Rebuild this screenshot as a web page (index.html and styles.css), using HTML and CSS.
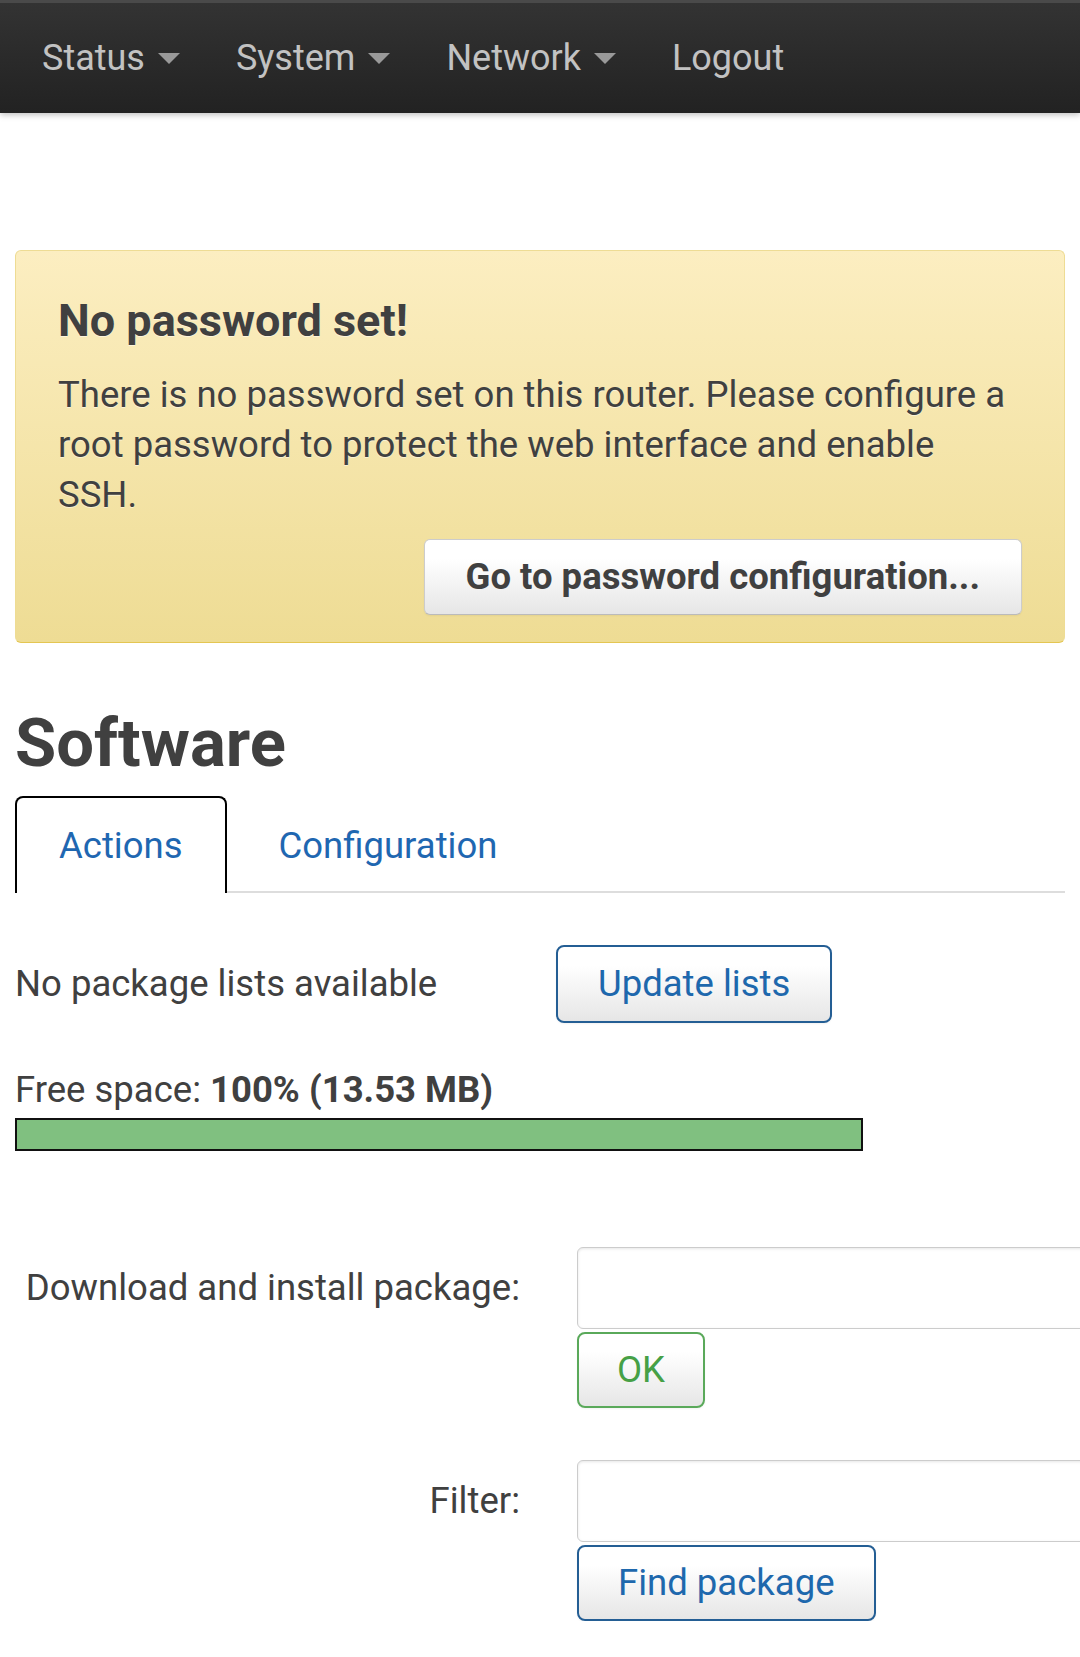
FILE: index.html
```html
<!DOCTYPE html>
<html lang="en">
<head>
    <meta charset="UTF-8">
    <meta name="viewport" content="width=device-width, initial-scale=1.0">
    <title>Software - LuCI</title>
    <link rel="stylesheet" href="styles.css">
</head>
<body>
    <header class="navbar">
        <ul class="nav">
            <li><a href="#" class="dropdown">Status</a></li>
            <li><a href="#" class="dropdown">System</a></li>
            <li><a href="#" class="dropdown">Network</a></li>
            <li><a href="#">Logout</a></li>
        </ul>
    </header>

    <main class="container">
        <div class="alert">
            <h4>No password set!</h4>
            <p>There is no password set on this router. Please configure a root password to protect the web interface and enable SSH.</p>
            <div class="alert-actions">
                <button class="btn">Go to password configuration...</button>
            </div>
        </div>

        <h2>Software</h2>
        <ul class="tabs">
            <li class="active"><a href="#">Actions</a></li>
            <li><a href="#">Configuration</a></li>
        </ul>

        <div class="lists-row">
            <span>No package lists available</span>
            <div><button class="btn btn-blue">Update lists</button></div>
        </div>

        <div class="free-space">
            Free space: <strong>100% (13.53 MB)</strong>
            <div class="progress"><div class="progress-bar" style="width: 100%"></div></div>
        </div>

        <div class="form-row">
            <label for="pkgUrl">Download and install package:</label>
            <div class="controls">
                <input type="text" id="pkgUrl">
                <button class="btn btn-green">OK</button>
            </div>
        </div>

        <div class="form-row filter-row">
            <label for="filter">Filter:</label>
            <div class="controls">
                <input type="text" id="filter">
                <button class="btn btn-blue btn-find">Find package</button>
            </div>
        </div>
    </main>
</body>
</html>
```

FILE: styles.css
```css
html, body {
    margin: 0;
    padding: 0;
}
body {
    font-family: Roboto, "Liberation Sans", sans-serif;
    font-size: 36.5px;
    line-height: 50px;
    color: #404040;
    background: #fff;
    overflow-x: hidden;
}

/* top bar */
.navbar {
    height: 110px;
    border-top: 3px solid #4a4a4a;
    background: linear-gradient(#333, #222);
    box-shadow: 0 2px 6px rgba(0, 0, 0, 0.25);
}
.nav {
    list-style: none;
    margin: 0;
    padding: 0 0 0 42px;
    display: flex;
    gap: 56px;
    font-size: 36px;
}
.nav a {
    display: flex;
    align-items: center;
    line-height: 110px;
    color: #c2c2c2;
    text-decoration: none;
}
.nav a.dropdown::after {
    content: "";
    margin-left: 13px;
    border-left: 11px solid transparent;
    border-right: 11px solid transparent;
    border-top: 11px solid #999;
}

.container {
    padding: 137px 15px 0;
}

/* warning box */
.alert {
    padding: 42px 42px 27px;
    border: 1px solid #eedc94;
    border-bottom-color: #e4c652;
    border-radius: 6px;
    background: linear-gradient(#fceec1, #eedc94);
    text-shadow: 0 1px 0 rgba(255, 255, 255, 0.5);
}
.alert h4 {
    margin: 0 0 21px;
    font-size: 45px;
    line-height: 56px;
    font-weight: 700;
}
.alert p {
    margin: 0 0 19px;
    max-width: 952px;
}
.alert-actions {
    display: flex;
    justify-content: flex-end;
}

.btn {
    font-family: inherit;
    font-size: 36.5px;
    line-height: 50px;
    padding: 12px 41px;
    color: #404040;
    border: 1px solid #ccc;
    border-bottom-color: #bbb;
    border-radius: 6px;
    background: linear-gradient(#fff, #fff 25%, #e6e6e6);
    box-shadow: inset 0 1px 0 rgba(255, 255, 255, 0.2), 0 1px 2px rgba(0, 0, 0, 0.05);
    cursor: pointer;
}
.alert .btn {
    font-weight: 700;
}
.btn-blue {
    color: #1e68ad;
    border: 2px solid #245e94;
    border-radius: 8px;
    padding: 12px 40px;
}
.btn-green {
    color: #46a046;
    border: 2px solid #5aa95a;
    border-radius: 8px;
    padding: 11px 38px;
}
.btn-find {
    padding: 11px 39px;
}

h2 {
    margin: 60px 0 13px;
    font-size: 67px;
    line-height: 80px;
    font-weight: 700;
}

/* tabs */
.tabs {
    list-style: none;
    margin: 0;
    padding: 0;
    display: flex;
    gap: 8px;
    border-bottom: 2px solid #ddd;
}
.tabs a {
    display: block;
    padding: 0 42px;
    line-height: 95px;
    margin-bottom: -2px;
    border: 2px solid transparent;
    border-bottom: 0;
    border-radius: 8px 8px 0 0;
    color: #1f67b1;
    text-decoration: none;
}
.tabs .active a {
    border-color: #000;
    background: #fff;
}

.lists-row {
    display: grid;
    grid-template-columns: 541px auto;
    align-items: center;
    margin-top: 52px;
}

.free-space {
    margin-top: 42px;
}
.progress {
    box-sizing: border-box;
    width: 848px;
    height: 33px;
    margin-top: 3px;
    border: 2px solid #111;
    background: #fff;
}
.progress-bar {
    height: 100%;
    background: #80c080;
}

/* install / filter forms */
.form-row {
    display: grid;
    grid-template-columns: 505px auto;
    column-gap: 57px;
    margin-top: 96px;
}
.filter-row {
    margin-top: 52px;
}
.form-row label {
    text-align: right;
    padding-top: 16px;
}
.controls {
    display: flex;
    flex-direction: column;
    align-items: flex-start;
    gap: 3px;
}
.controls input {
    box-sizing: border-box;
    width: 620px;
    height: 82px;
    border: 1px solid #ccc;
    border-radius: 6px;
    box-shadow: inset 0 1px 3px rgba(0, 0, 0, 0.1);
    font-family: inherit;
    font-size: 36px;
}
```
